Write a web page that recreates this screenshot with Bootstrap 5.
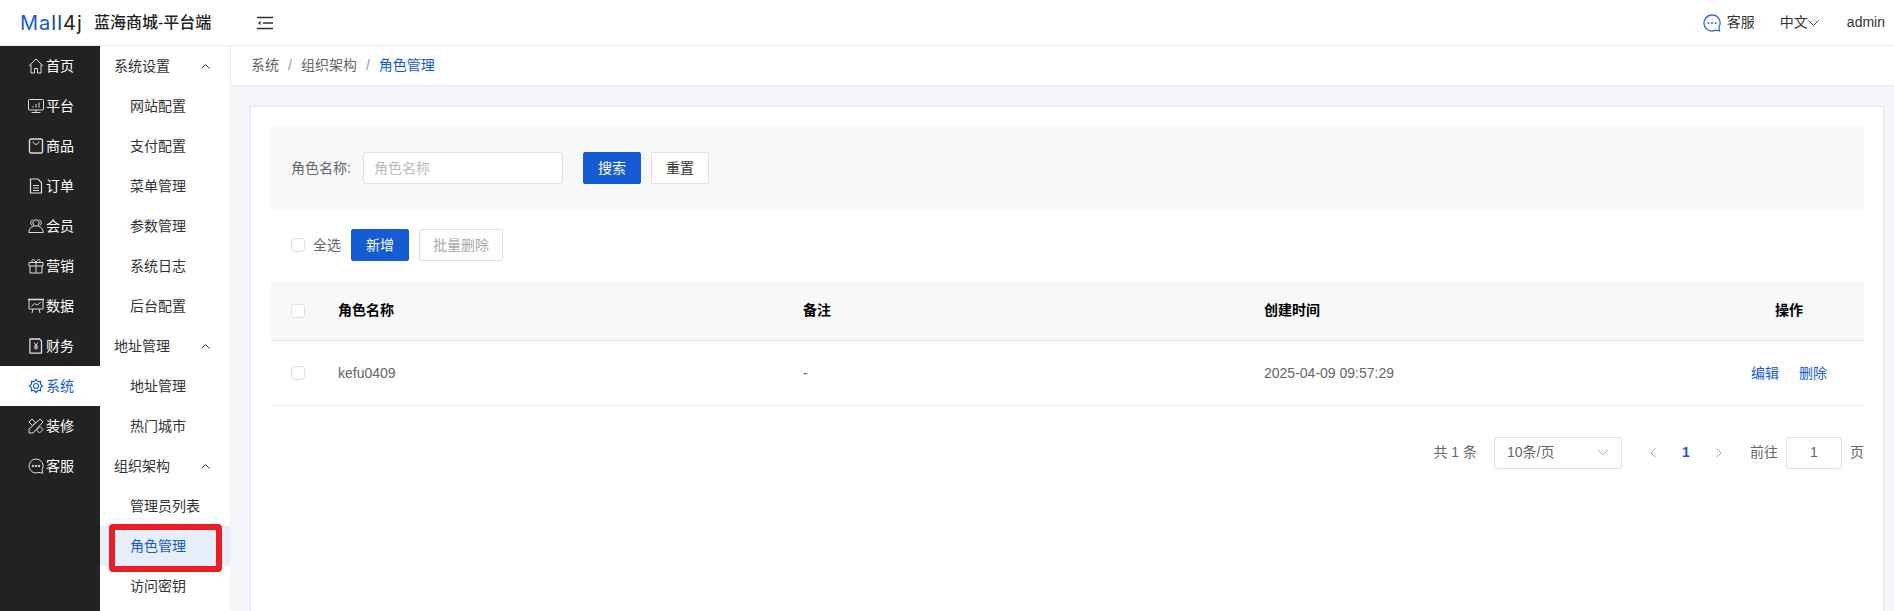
<!DOCTYPE html>
<html lang="zh-CN">
<head>
  <meta charset="UTF-8">
  <meta name="viewport" content="width=device-width, initial-scale=1.0">
  <title>角色管理</title>
  <link href="https://cdn.jsdelivr.net/npm/bootstrap@5.3.2/dist/css/bootstrap.min.css" rel="stylesheet">
  <style>
	html, body { height: 100%; }
	body {
	  font-family: "Liberation Sans", "Noto Sans CJK SC", sans-serif;
	  font-size: 14px;
	  color: #333;
	  overflow: hidden;
	  background: #f3f5f9;
	}
	.top-bar { height: 46px; background: #fff; border-bottom: 1px solid #ebebeb; padding-left: 20px; padding-right: 9px; }
	.logo-text { width: 74px; font-family: "Inter", "Liberation Sans", sans-serif; font-weight: 400; font-size: 20px; letter-spacing: 1px; line-height: 1; color: #222; }
	.logo-text b { font-weight: 400; color: #155bd4; }
	.logo-text i { font-style: normal; color: #1d3f86; }
	.app-title { width: 163px; font-size: 16px; font-weight: 500; color: #222; }
	.top-link { color: #333; font-size: 14px; }
	.help-text { margin-left: 6px; margin-right: 25px; }
	.lang-arrow { margin-right: 28px; }
	.shell { height: calc(100% - 46px); position: relative; }
	.side-main { width: 100px; flex: none; background: #222; }
	.side-item { height: 40px; padding-left: 28px; gap: 2px; color: #fff; }
	.side-item svg { width: 16px; height: 16px; flex: none; color: #ddd; }
	.side-item.is-on { background: #fff; color: #155bd4; }
	.side-item.is-on svg { color: #155bd4; }
	.side-sub { width: 130px; flex: none; background: #fff; }
	.sub-group { height: 40px; padding-left: 14px; padding-right: 20px; color: #333; }
	.sub-link { height: 40px; padding-left: 30px; color: #333; }
	.sub-link.is-on { background: #e7eefa; color: #155bd4; }
	.mark-box { position: absolute; left: 109px; top: 478px; width: 113px; height: 48px; border: 6px solid #ee1c25; border-radius: 4px; pointer-events: none; }
	.crumb-bar { height: 40px; background: #fff; border-left: 1px solid #e8e9f0; border-bottom: 1px solid #e4e6ee; padding-left: 20px; flex: none; }
	.crumb-bar .breadcrumb { --bs-breadcrumb-divider-color: #999; --bs-breadcrumb-item-padding-x: 9px; color: #666; margin: 0; }
	.crumb-bar .breadcrumb-item.active { color: #155bd4; }
	.main-wrap { padding: 20px 10px 0 20px; flex: 1; min-width: 0; min-height: 0; }
	.main-card { height: 100%; background: #fff; border: 1px solid #e4e6ee; border-bottom: 0; padding: 20px 19px 0 20px; }
	.search-panel { height: 82px; background: #f7f8fa; padding-left: 20px; }
	.field-label { color: #666; width: 72px; }
	.field-input.form-control { width: 200px; height: 32px; padding: 0 10px; font-size: 14px; border-color: #dcdfe6; border-radius: 3px; margin-right: 20px; }
	.field-input.form-control::placeholder { color: #bbb; }
	.act-btn.btn { width: 58px; height: 32px; padding: 0; font-size: 14px; border-radius: 2px; }
	.act-btn.is-wide.btn { width: 84px; }
	.act-btn.btn-primary { background: #155bd4; border-color: #155bd4; }
	.act-btn.btn-light { background: #fff; border-color: #dcdfe6; color: #333; }
	.act-btn.btn-light:disabled { color: #aaa; opacity: 1; background: #fff; border-color: #dcdfe6; }
	.reset-btn { margin-left: 10px; }
	.tool-row { padding: 20px 0 20px 20px; gap: 10px; }
	.tick { width: 14px; height: 14px; margin: 0; border: 1px solid #dcdfe6; border-radius: 2px; flex: none; }
	.all-label { color: #666; margin-left: -2px; }
	.role-table { table-layout: fixed; width: 100%; margin: 0; }
	.role-table th { height: 59px; background: #f7f8fa; color: #000; font-weight: 700; border-bottom: 1px solid #e8eaf0; vertical-align: middle; padding: 1px 10px 0; }
	.role-table td { height: 65px; color: #666; border-bottom: 1px solid #ebebeb; vertical-align: middle; padding: 1px 10px 0; }
	.role-table .tick-cell { padding-left: 20px; }
	.op-link { color: #155bd4; text-decoration: none; }
	.pager-row { padding-top: 31px; color: #666; }
	.size-pick { width: 128px; height: 32px; border: 1px solid #dcdfe6; border-radius: 3px; padding: 0 12px; margin: 0 28px 0 17px; color: #666; }
	.page-now { color: #155bd4; font-weight: 700; width: 60px; text-align: center; }
	.page-input { width: 56px; height: 32px; border: 1px solid #dcdfe6; border-radius: 3px; margin: 0 8px; color: #666; }
  </style>
</head>
<body>
  <!-- Header -->
  <div class="top-bar d-flex align-items-center">
	<div class="logo-text"><b>Ma</b><i>ll</i>4j</div>
	<div class="app-title">蓝海商城-平台端</div>
	<svg width="16" height="14" viewBox="0 0 16 14" fill="none" stroke="#333" stroke-width="1.3"><path d="M0 1.5h16M6 7h10M0 12.5h16"/><path d="M3.5 4.8L1 7l2.5 2.2z" fill="#333" stroke="none"/></svg>
	<div class="ms-auto d-flex align-items-center top-link">
	  <svg width="18" height="18" viewBox="0 0 18 18" fill="none"><path d="M9 1a8 8 0 1 0 3.5 15.2L16.500 17l-.6-3.800A8 8 0 0 0 9 1z" stroke="#2a6fdb" stroke-width="1.3"/><circle cx="5.5" cy="9" r="1" fill="#2a6fdb"/><circle cx="9" cy="9" r="1" fill="#2a6fdb"/><circle cx="12.5" cy="9" r="1" fill="#2a6fdb"/></svg>
	  <span class="help-text">客服</span>
	  <span>中文</span>
	  <svg class="lang-arrow" width="11" height="6" viewBox="0 0 11 6" fill="none" stroke="#444"><path d="M.5.5l5 5 5-5"/></svg>
	  <span>admin</span>
	</div>
  </div>

  <div class="shell d-flex">
	<!-- Main menu -->
	<div class="side-main">
	  <div class="side-item d-flex align-items-center"><svg viewBox="0 0 16 16" fill="none" stroke="currentColor"><path d="M.8 8L8 1l7.200 7M3 6.500V15h3.500v-4.500h3V15H13V6.500"/></svg>首页</div>
	  <div class="side-item d-flex align-items-center"><svg viewBox="0 0 16 16" fill="none" stroke="currentColor"><rect x=".5" y="1.5" width="15" height="10.500" rx="1"/><path d="M5 9.500V8M8 9.500V6M11 9.500V4.500M3.500 14.500h9M8 12v2.500"/></svg>平台</div>
	  <div class="side-item d-flex align-items-center"><svg viewBox="0 0 16 16" fill="none" stroke="currentColor" stroke-width="1.4"><rect x="1.5" y="1" width="13" height="14" rx="1.5"/><path d="M5 3.500c.5 2 1.500 2.800 3 2.800s2.500-.8 3-2.800" stroke-width="1"/></svg>商品</div>
	  <div class="side-item d-flex align-items-center"><svg viewBox="0 0 16 16" fill="none" stroke="currentColor" stroke-width="1.2"><path d="M2.500 1h7.500l3.500 3.500V15h-11zM5 7.500h6M5 10h6M5 12.500h6"/></svg>订单</div>
	  <div class="side-item d-flex align-items-center"><svg viewBox="0 0 16 16" fill="none" stroke="currentColor"><circle cx="8" cy="5" r="3.200"/><path d="M.8 14.500c0-3.500 2.500-6 5-6.300M15.200 14.500c0-3.500-2.500-6-5-6.300M.8 14.500h14.400M4.800 1.800C2.500 2 2 6 4 7.500M11.200 1.800c2.300.2 2.800 4.200.8 5.700"/></svg>会员</div>
	  <div class="side-item d-flex align-items-center"><svg viewBox="0 0 16 16" fill="none" stroke="currentColor"><path d="M1 4.500h14v3.500H1zM2 8v7h12V8M8 4.500V15M8 4.500C6.500 .5 2.500 .5 4.500 4.500M8 4.500c1.500-4 5.500-4 3.500 0"/></svg>营销</div>
	  <div class="side-item d-flex align-items-center"><svg viewBox="0 0 16 16" fill="none" stroke="currentColor"><path d="M0 1.500h16" stroke-width="1.6"/><path d="M1 1.500V11h14V1.500M3.500 8.500l3-3 2.500 1.500 3.500-2.500M5 11l-1 4M11 11l1 4"/></svg>数据</div>
	  <div class="side-item d-flex align-items-center"><svg viewBox="0 0 16 16" fill="none" stroke="currentColor"><path d="M2.500 1h9l2 2v11.500a.6.600 0 0 1-.6.600H2.500a.6.600 0 0 1-.6-.6V1.600a.6.600 0 0 1 .6-.6z" stroke-width="1.3"/><path d="M6 4.500l2 2.500 2-2.500M5.800 8h4.400M5.800 10h4.400M8 7v4.500"/></svg>财务</div>
	  <div class="side-item is-on d-flex align-items-center"><svg viewBox="0 0 16 16" fill="none" stroke="currentColor" stroke-width="1.2"><path d="M8 1A3.200 3.200 0 0 0 12.950 3.050 3.200 3.200 0 0 0 15 8 3.200 3.200 0 0 0 12.950 12.950 3.200 3.200 0 0 0 8 15 3.200 3.200 0 0 0 3.050 12.950 3.200 3.200 0 0 0 1 8 3.200 3.200 0 0 0 3.050 3.050 3.200 3.200 0 0 0 8 1z"/><circle cx="8" cy="8" r="2.500"/></svg>系统</div>
	  <div class="side-item d-flex align-items-center"><svg viewBox="0 0 16 16" fill="none" stroke="currentColor"><path d="M4 1l3.500 3.500-3 3L1 4zM12 8.500l3 3-3.500 3.500-3-3zM12 1l3 3L5 15H1v-4z"/></svg>装修</div>
	  <div class="side-item d-flex align-items-center"><svg viewBox="0 0 16 16" fill="none" stroke="currentColor"><path d="M8 1a7 7 0 1 0 2.900 13.400l3.900.8-.7-3.500A7 7 0 0 0 8 1z"/><circle cx="5" cy="8" r=".8" fill="currentColor"/><circle cx="8" cy="8" r=".8" fill="currentColor"/><circle cx="11" cy="8" r=".8" fill="currentColor"/></svg>客服</div>
	</div>

	<!-- Sub menu -->
	<div class="side-sub">
	  <div class="sub-group d-flex align-items-center justify-content-between">系统设置<svg width="9" height="5" viewBox="0 0 9 5" fill="none" stroke="#333"><path d="M.5 4.500l4-4 4 4"/></svg></div>
	  <div class="sub-link d-flex align-items-center">网站配置</div>
	  <div class="sub-link d-flex align-items-center">支付配置</div>
	  <div class="sub-link d-flex align-items-center">菜单管理</div>
	  <div class="sub-link d-flex align-items-center">参数管理</div>
	  <div class="sub-link d-flex align-items-center">系统日志</div>
	  <div class="sub-link d-flex align-items-center">后台配置</div>
	  <div class="sub-group d-flex align-items-center justify-content-between">地址管理<svg width="9" height="5" viewBox="0 0 9 5" fill="none" stroke="#333"><path d="M.5 4.500l4-4 4 4"/></svg></div>
	  <div class="sub-link d-flex align-items-center">地址管理</div>
	  <div class="sub-link d-flex align-items-center">热门城市</div>
	  <div class="sub-group d-flex align-items-center justify-content-between">组织架构<svg width="9" height="5" viewBox="0 0 9 5" fill="none" stroke="#333"><path d="M.5 4.500l4-4 4 4"/></svg></div>
	  <div class="sub-link d-flex align-items-center">管理员列表</div>
	  <div class="sub-link is-on d-flex align-items-center">角色管理</div>
	  <div class="sub-link d-flex align-items-center">访问密钥</div>
	</div>

	<!-- Content -->
	<div class="flex-grow-1 d-flex flex-column">
	  <div class="crumb-bar d-flex align-items-center">
		<ol class="breadcrumb">
		  <li class="breadcrumb-item">系统</li>
		  <li class="breadcrumb-item">组织架构</li>
		  <li class="breadcrumb-item active">角色管理</li>
		</ol>
	  </div>
	  <div class="main-wrap">
		<div class="main-card">
		  <div class="search-panel d-flex align-items-center">
			<span class="field-label">角色名称:</span>
			<input class="form-control field-input" placeholder="角色名称">
			<button class="btn btn-primary act-btn">搜索</button>
			<button class="btn btn-light act-btn reset-btn">重置</button>
		  </div>

		  <div class="tool-row d-flex align-items-center">
			<input class="form-check-input tick" type="checkbox">
			<span class="all-label">全选</span>
			<button class="btn btn-primary act-btn">新增</button>
			<button class="btn btn-light act-btn is-wide" disabled>批量删除</button>
		  </div>

		  <table class="table role-table">
			<colgroup><col width="57"><col width="465"><col width="461"><col><col width="150"></colgroup>
			<thead>
			  <tr>
				<th class="tick-cell"><input class="form-check-input tick d-block" type="checkbox"></th>
				<th>角色名称</th>
				<th>备注</th>
				<th>创建时间</th>
				<th class="text-center">操作</th>
			  </tr>
			</thead>
			<tbody>
			  <tr>
				<td class="tick-cell"><input class="form-check-input tick d-block" type="checkbox"></td>
				<td>kefu0409</td>
				<td>-</td>
				<td>2025-04-09 09:57:29</td>
				<td class="text-center"><a class="op-link me-3" href="#">编辑</a> <a class="op-link" href="#">删除</a></td>
			  </tr>
			</tbody>
		  </table>

		  <div class="pager-row d-flex align-items-center justify-content-end">
			<span>共 1 条</span>
			<div class="size-pick d-flex align-items-center justify-content-between">10条/页
			  <svg width="12" height="7" viewBox="0 0 12 7" fill="none" stroke="#bbb"><path d="M.5.5L6 6 11.500.5"/></svg>
			</div>
			<svg width="6" height="10" viewBox="0 0 6 10" fill="none" stroke="#aaa"><path d="M5.500.5L1 5l4.500 4.500"/></svg>
			<span class="page-now">1</span>
			<svg class="me-4" width="6" height="10" viewBox="0 0 6 10" fill="none" stroke="#aaa"><path d="M.5.5L5 5 .5 9.500"/></svg>
			<span class="ms-1">前往</span>
			<div class="page-input d-flex align-items-center justify-content-center">1</div>
			<span>页</span>
		  </div>
		</div>
	  </div>
	</div>
	<div class="mark-box"></div>
  </div>

  <script src="https://cdn.jsdelivr.net/npm/bootstrap@5.3.2/dist/js/bootstrap.bundle.min.js"></script>
</body>
</html>
